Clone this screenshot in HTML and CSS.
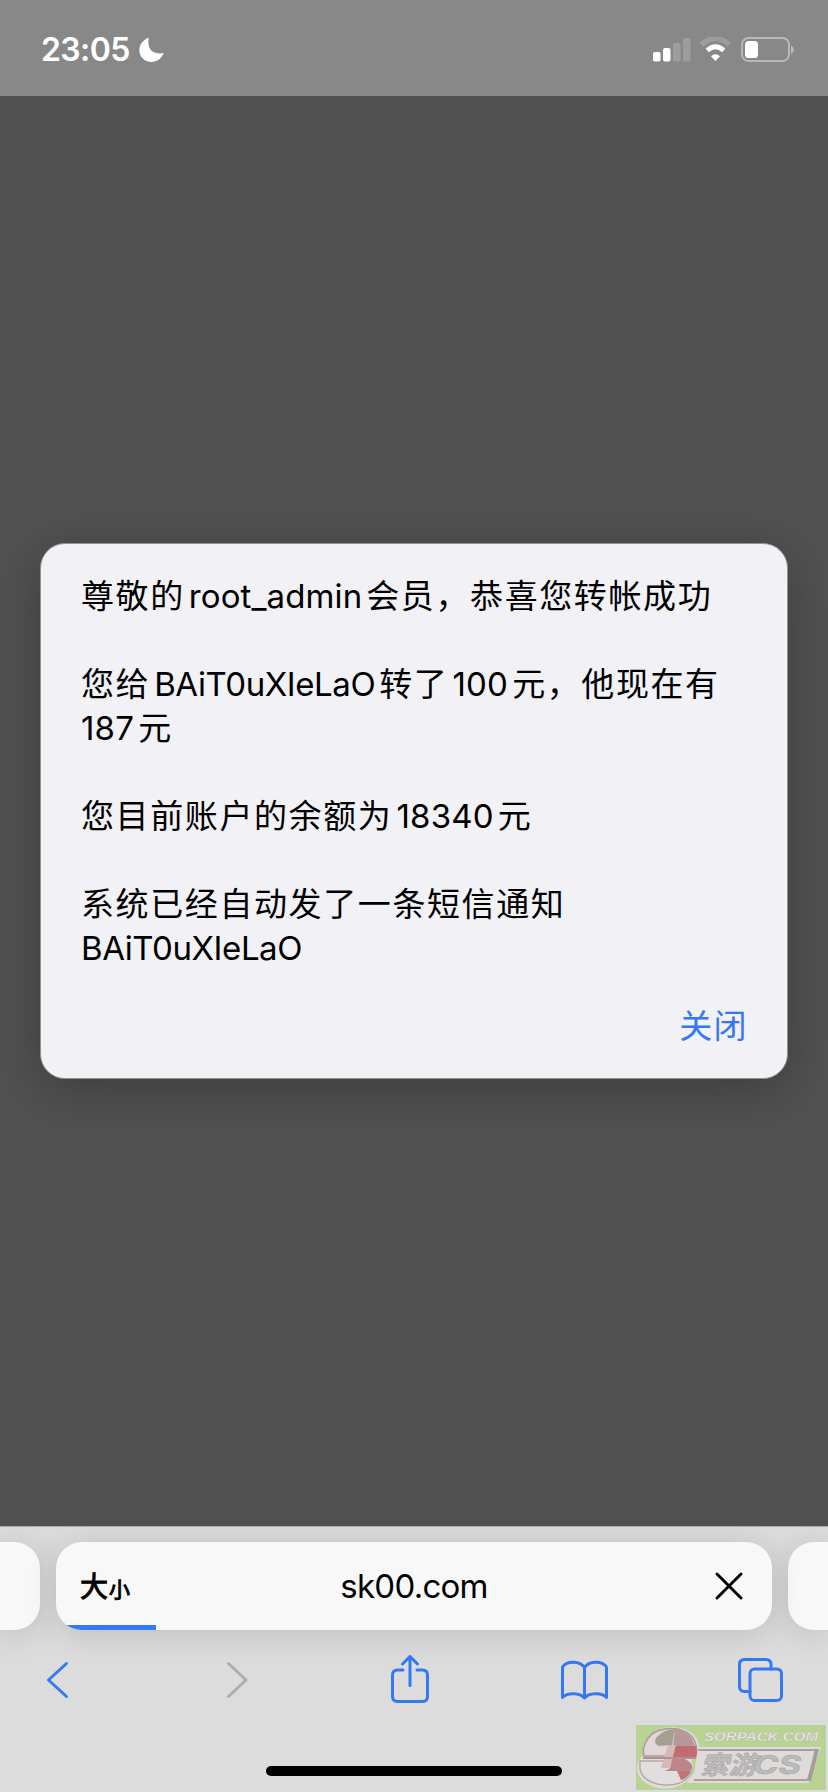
FILE: index.html
```html
<!DOCTYPE html>
<html lang="zh-CN">
<head>
<meta charset="utf-8">
<title>sk00.com</title>
<link rel="stylesheet" href="styles.css">
</head>
<body>
<header class="status">
  <div class="clock"><span class="time">23:05</span>
    <svg class="moon" width="26" height="26" viewBox="0 0 26 26"><path d="M9.8.7C8.2 9 10.800 18.300 24.600 16.100C22.400 22 17.500 25 12.500 25C5.500 25 .3 19.600 .3 13.300C.3 7.400 4.300 2.500 9.800.7Z" fill="#fff"/></svg>
  </div>
  <svg class="indicators" width="142" height="26" viewBox="0 0 142 26">
    <g fill="#fff"><rect x="0" y="15" width="7.500" height="9.500" rx="1.800"/><rect x="10" y="11" width="7.500" height="13.500" rx="1.800"/></g>
    <g fill="#9d9d9d"><rect x="20" y="6" width="7.500" height="18.500" rx="1.800"/><rect x="30" y="1" width="7.500" height="23.500" rx="1.800"/></g>
    <path d="M48.500 7.500Q62.500-4.500 76.500 7.500" fill="none" stroke="#9d9d9d" stroke-width="5.200"/>
    <path d="M54.200 13.300Q62.500 6.200 70.800 13.300" fill="none" stroke="#fff" stroke-width="5"/>
    <path d="M58 19.200Q62.500 15.500 67 19.200L62.500 24Z" fill="#fff"/>
    <rect x="89" y="1" width="47" height="23" rx="6.500" fill="none" stroke="#b8b8b8" stroke-width="2"/>
    <rect x="92" y="4" width="13" height="17" rx="3.500" fill="#fff"/>
    <path d="M138 8.500Q141 10 141 12.700T138 17Z" fill="#b8b8b8"/>
  </svg>
</header>
<main class="page">
  <section class="dialog">
    <p class="line">尊敬的<span class="latin user">root_admin</span>会员，恭喜您转帐成功</p>
    <p class="line">您给<span class="latin name">BAiT0uXIeLaO</span>转了<span class="latin num">100</span>元，他现在有<br><span class="latin num lead">187</span>元</p>
    <p class="line">您目前账户的余额为<span class="latin num">18340</span>元</p>
    <p class="line">系统已经自动发了一条短信通知<br><span class="latin name lead">BAiT0uXIeLaO</span></p>
    <div class="actions"><button class="close">关闭</button></div>
  </section>
</main>
<footer class="browser">
  <div class="tabs">
    <div class="tab side prev"></div>
    <div class="tab current">
      <span class="size">大<small class="small">小</small></span>
      <span class="host">sk00.com</span>
      <svg class="stop" width="28" height="28" viewBox="0 0 28 28"><path d="M2 2L26 26M26 2L2 26" stroke="#000" stroke-width="2.900" stroke-linecap="round"/></svg>
      <i class="progress"></i>
    </div>
    <div class="tab side next"></div>
  </div>
  <nav class="tools">
    <svg width="50" height="50" viewBox="0 0 50 50"><path d="M31.500 8.500L13.500 25L31.500 41.500" class="ink"/></svg>
    <svg width="50" height="50" viewBox="0 0 50 50"><path d="M18.500 8.500L36 25L18.500 41.500" class="ink muted"/></svg>
    <svg width="50" height="50" viewBox="0 0 50 50"><path d="M18 15H12.500Q7.500 15 7.500 20V41.500Q7.500 46.500 12.500 46.500H37.500Q42.500 46.500 42.500 41.500V20Q42.500 15 37.500 15H32M25 30.500V2M17.500 9L25 1.500L32.500 9" class="ink"/></svg>
    <svg width="50" height="50" viewBox="0 0 50 50"><path d="M24.500 12.500C20 5.500 7 5.500 2.500 12V42.500C8 37 20 38 24.500 43C29 38 41 37 46.500 42.500V12C42 5.500 29 5.500 24.500 12.500V43" class="ink"/></svg>
    <svg width="50" height="50" viewBox="0 0 50 50"><path d="M15 36.500H9.500Q4.500 36.500 4.500 31.500V9.500Q4.500 4.500 9.500 4.500H31Q36 4.500 36 9.500V14" class="ink"/><rect x="15" y="14" width="31.500" height="31.500" rx="4.500" class="ink"/></svg>
  </nav>
  <div class="home"></div>
  <svg class="stamp" width="190" height="65" viewBox="0 0 190 65">
    <rect width="190" height="65" fill="#b8d394"/>
    <ellipse cx="36" cy="22" rx="27" ry="20" fill="#e0dedb"/>
    <ellipse cx="29" cy="43" rx="28" ry="20.500" fill="#e0dedb"/>
    <path d="M10 17C15 5 30 2 42 4C55 7 61 16 61 28L45 31H8Q6 24 10 17Z" fill="#e0d8d6" stroke="#ad9898" stroke-width="1.500"/>
    <path d="M20 13Q28 4 39 4L36 20L23 21Q17 18 20 13Z" fill="#a5a090"/>
    <path d="M39 4Q55 6 59 21H37Z" fill="#b69a9b"/>
    <path d="M38 21H60L62 32H34Z" fill="#c06c70"/>
    <path d="M4 36H48Q59 40 55 48Q48 61 28 60Q7 58 4 44Z" fill="#e1dfde" stroke="#b9a7a8" stroke-width="1.500"/>
    <path d="M34 34H49Q60 40 54 46H28Q39 43 32 37Z" fill="#bd8588"/>
    <path d="M41 46H55Q51 54 45 55Z" fill="#be7478"/>
    <path d="M32 20H40L34 43H25Z" fill="#d3bab9"/>
    <path d="M7 33H62" stroke="#b29090" stroke-width="2"/>
    <path d="M62 22H185L173 58H50L58 48Z" fill="#dedcda"/>
    <path d="M62 25H181L172 55H58" fill="none" stroke="#b09d9d" stroke-width="2"/>
    <path d="M181 24L173 56" stroke="#a99b9a" stroke-width="4"/>
    <text x="68" y="16" textLength="114" lengthAdjust="spacingAndGlyphs" class="stamp-url">SORPACK.COM</text>
    <text x="64" y="49" textLength="57" lengthAdjust="spacingAndGlyphs" class="stamp-mark">索游</text>
    <text x="117" y="49" textLength="48" lengthAdjust="spacingAndGlyphs" class="stamp-mark">CS</text>
  </svg>
</footer>
</body>
</html>
```
FILE: styles.css
```css
* { box-sizing: border-box; }
body {
  margin: 0;
  width: 828px;
  height: 1792px;
  overflow: hidden;
  display: flex;
  flex-direction: column;
  background: #515151;
  color: #000;
  font-family: Inter, "Noto Sans CJK SC", sans-serif;
}
.status {
  height: 96px;
  padding: 37px 33px 0 41px;
  display: flex;
  justify-content: space-between;
  align-items: flex-start;
  background: #888;
}
.clock { display: flex; gap: 9px; height: 26px; align-items: center; }
.time { color: #fff; font-size: 32px; font-weight: 600; line-height: 26px; letter-spacing: -.6px; }
.page {
  height: 1430px;
  padding: 447px 40px 0;
  background: #515151;
}
.dialog {
  height: 536px;
  padding: 28px 39px 0 40px;
  border: 1px solid #929292;
  border-radius: 25px;
  background: #f1f1f6;
  box-shadow: 0 12px 50px rgba(0, 0, 0, .24);
}
.line {
  margin: 0 0 44px;
  font-family: "Noto Sans CJK SC", sans-serif;
  font-size: 33px;
  line-height: 44px;
  letter-spacing: 1.6px;
  white-space: nowrap;
}
.latin { font-family: Inter, sans-serif; margin: 0 4px; line-height: 0; }
.user { letter-spacing: .1px; }
.name { letter-spacing: -.42px; }
.num { letter-spacing: .2px; }
.lead { margin-left: 0; }
.actions { display: flex; justify-content: flex-end; margin-top: -10px; }
.close {
  padding: 0;
  border: 0;
  background: none;
  color: #3478f6;
  font: 33px/44px "Noto Sans CJK SC", sans-serif;
  letter-spacing: 1.400px;
}
.browser {
  position: relative;
  height: 266px;
  display: flex;
  flex-direction: column;
  border-top: 1px solid #aaa;
  background: #dcdcdc;
}
.tabs { display: flex; gap: 16px; padding-top: 15px; height: 103px; }
.tab { height: 88px; background: #f8f8f8; border-radius: 26px; box-shadow: 0 4px 32px rgba(0, 0, 0, .14); }
.side { width: 40px; }
.prev { border-radius: 0 26px 26px 0; }
.next { border-radius: 26px 0 0 26px; }
.current {
  position: relative;
  overflow: hidden;
  width: 716px;
  padding: 0 24px;
  display: grid;
  grid-template-columns: 80px 1fr 80px;
  align-items: center;
}
.size { font: 28px/40px "Noto Sans CJK SC", sans-serif; -webkit-text-stroke: 1px #000; }
.small { margin-left: 1px; font-size: 21px; }
.host { text-align: center; font-size: 33px; line-height: 40px; letter-spacing: -.75px; }
.stop { justify-self: end; margin-right: 5px; }
.progress { position: absolute; left: 0; bottom: 0; width: 100px; height: 5px; background: #3478f6; }
.tools { display: flex; justify-content: space-between; padding: 25px 43px 0 35px; height: 75px; }
.ink { fill: none; stroke: #3478f6; stroke-width: 3; stroke-linecap: round; stroke-linejoin: round; }
.muted { stroke: #adadad; }
.home { width: 296px; height: 10px; margin: 61px auto 0; border-radius: 5px; background: #000; }
.stamp { position: absolute; right: 2px; bottom: 2px; }
.stamp-url { font: italic 700 13px "Liberation Sans", sans-serif; fill: #ececea; stroke: #b8b0a8; stroke-width: .4px; }
.stamp-mark { font: italic 700 25px Inter, "Noto Sans CJK SC", sans-serif; fill: #bcbaba; stroke: #a5a2a2; stroke-width: .5px; }
```
